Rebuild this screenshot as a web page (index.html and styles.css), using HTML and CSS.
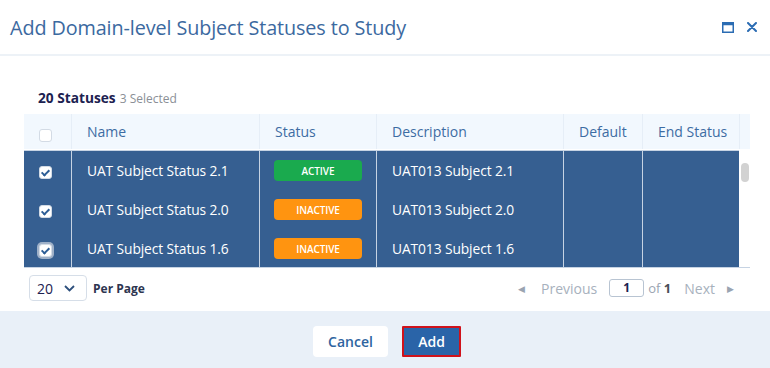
FILE: index.html
```html
<!DOCTYPE html>
<html lang="en">
<head>
    <meta charset="UTF-8">
    <title>Add Domain-level Subject Statuses to Study</title>
    <link rel="stylesheet" href="styles.css">
</head>
<body>
    <div class="dialog">
        <div class="dlg-head">
            <h1>Add Domain-level Subject Statuses to Study</h1>
            <div class="head-tools">
                <svg width="12" height="11" viewBox="0 0 12 11"><rect x="0.75" y="0.75" width="10.5" height="9.5" fill="none" stroke="#2b6cb3" stroke-width="1.5"/><rect x="0.75" y="0.75" width="10.5" height="2.5" fill="#2b6cb3"/></svg>
                <svg width="10" height="10" viewBox="0 0 10 10"><path d="M1 1L9 9M9 1L1 9" stroke="#2b6cb3" stroke-width="2" stroke-linecap="round"/></svg>
            </div>
        </div>

        <div class="dlg-body">
            <div class="summary"><b>20 Statuses</b> <span>3 Selected</span></div>

            <div class="grid">
                <div class="grid-head">
                    <div class="cell chk"><span class="box"></span></div>
                    <div class="cell">Name</div>
                    <div class="cell">Status</div>
                    <div class="cell">Description</div>
                    <div class="cell">Default</div>
                    <div class="cell">End Status</div>
                    <div class="cell"></div>
                </div>
                <div class="grid-scroll">
                    <div class="grid-rows">
                        <div class="row">
                            <div class="cell chk"><span class="box on"></span></div>
                            <div class="cell">UAT Subject Status 2.1</div>
                            <div class="cell"><span class="badge active">ACTIVE</span></div>
                            <div class="cell">UAT013 Subject 2.1</div>
                            <div class="cell"></div>
                            <div class="cell"></div>
                        </div>
                        <div class="row">
                            <div class="cell chk"><span class="box on"></span></div>
                            <div class="cell">UAT Subject Status 2.0</div>
                            <div class="cell"><span class="badge inactive">INACTIVE</span></div>
                            <div class="cell">UAT013 Subject 2.0</div>
                            <div class="cell"></div>
                            <div class="cell"></div>
                        </div>
                        <div class="row">
                            <div class="cell chk"><span class="box on focus"></span></div>
                            <div class="cell">UAT Subject Status 1.6</div>
                            <div class="cell"><span class="badge inactive">INACTIVE</span></div>
                            <div class="cell">UAT013 Subject 1.6</div>
                            <div class="cell"></div>
                            <div class="cell"></div>
                        </div>
                    </div>
                    <div class="scrollbar"><span class="thumb"></span></div>
                </div>
            </div>

            <div class="pager">
                <div class="per-page">
                    <div class="select">20
                        <svg width="11" height="7" viewBox="0 0 11 7"><path d="M1 1L5.5 5.5L10 1" fill="none" stroke="#2d4f7c" stroke-width="1.8"/></svg>
                    </div>
                    <b>Per Page</b>
                </div>
                <div class="pages">
                    <span class="arrow prev">&#9664;</span>
                    <span class="muted">Previous</span>
                    <span class="page-input">1</span>
                    <span class="of">of <b>1</b></span>
                    <span class="muted">Next</span>
                    <span class="arrow">&#9654;</span>
                </div>
            </div>
        </div>

        <div class="dlg-foot">
            <button class="btn cancel">Cancel</button>
            <button class="btn add">Add</button>
        </div>
    </div>
</body>
</html>
```

FILE: styles.css
```css
:root {
    --title-color: #3b69a0;
    --head-bg: #f2f8fe;
    --row-bg: #365f91;
    --line: #c6d3e3;
    --navy: #1c2150;
    --muted: #a7b1bd;
}
body {
    margin: 0;
    font-family: 'Open Sans', 'Noto Sans', Arial, sans-serif;
    background: #fff;
}
.dialog {
    width: 770px;
    height: 368px;
    display: flex;
    flex-direction: column;
}
.dlg-head {
    height: 54px;
    border-bottom: 2px solid #edf2f7;
    display: flex;
    align-items: center;
    justify-content: space-between;
    padding: 0 13px 0 10px;
}
h1 {
    margin: 0;
    font-size: 19.8px;
    font-weight: 400;
    color: var(--title-color);
    letter-spacing: -0.1px;
}
.head-tools {
    display: flex;
    align-items: center;
    gap: 13px;
}
.dlg-body {
    flex: 1;
    padding: 31px 20px 0 24px;
}
.summary {
    padding-left: 14px;
    height: 27px;
    line-height: 20px;
}
.summary b {
    font-size: 13.7px;
    color: var(--navy);
}
.summary span {
    font-size: 12px;
    color: #8a8f96;
}
.grid {
    width: 726px;
}
.grid-head,
.row {
    display: grid;
    grid-template-columns: 47px 188px 117px 187px 79px 97px 11px;
}
.row {
    grid-template-columns: 47px 188px 117px 187px 79px 97px;
    height: 39px;
}
.grid-head {
    height: 35px;
    background: var(--head-bg);
    border-bottom: 1px solid #fff;
}
.cell {
    display: flex;
    align-items: center;
    padding-left: 15px;
    font-size: 14px;
    white-space: nowrap;
}
.row .cell {
    font-size: 13.8px;
    letter-spacing: -0.1px;
}
.grid-head .cell {
    color: #3d6ca3;
    border-left: 1px solid #e6eef7;
}
.grid-head .cell:first-child {
    border-left: none;
}
.cell.chk {
    padding-left: 15px;
    padding-top: 4px;
}
.grid-head .cell.chk {
    padding-top: 8px;
}
.grid-scroll {
    display: flex;
    height: 117px;
    overflow: hidden;
    border-bottom: 1px solid var(--line);
}
.grid-rows {
    width: 715px;
    background: var(--row-bg);
    border-top: 1px solid var(--line);
}
.row .cell {
    color: #fff;
    border-left: 1px solid var(--line);
}
.row .cell:first-child {
    border-left: none;
}
.scrollbar {
    width: 11px;
    padding-top: 13px;
    display: flex;
    justify-content: center;
}
.thumb {
    width: 8px;
    height: 19px;
    border-radius: 4px;
    background: #d2d2d2;
}
.box {
    width: 13px;
    height: 13px;
    box-sizing: border-box;
    border: 1px solid #d3dbe5;
    border-radius: 3px;
    background: #fff;
    display: inline-block;
    position: relative;
}
.box.on::after {
    content: '';
    position: absolute;
    left: 3px;
    top: 1px;
    width: 3px;
    height: 6px;
    border: solid #2d5e96;
    border-width: 0 2px 2px 0;
    transform: rotate(45deg);
}
.box.focus {
    box-shadow: 0 0 0 2px #9fb1c8;
}
.badge {
    width: 88px;
    height: 21px;
    border-radius: 4px;
    color: #fff;
    font-size: 10px;
    font-weight: 600;
    display: flex;
    align-items: center;
    justify-content: center;
    margin-left: -1px;
}
.badge.active {
    background: #1aaa4e;
}
.badge.inactive {
    background: #ff9410;
}
.pager {
    display: flex;
    justify-content: space-between;
    align-items: center;
    height: 28px;
    margin-top: 6px;
    width: 710px;
}
.per-page {
    display: flex;
    align-items: center;
    gap: 6px;
    padding-left: 5px;
}
.select {
    width: 58px;
    height: 26px;
    box-sizing: border-box;
    border: 1px solid #d6dee8;
    border-radius: 4px;
    display: flex;
    align-items: center;
    justify-content: space-between;
    padding: 0 11px 0 7px;
    font-size: 14px;
    color: var(--navy);
}
.per-page b {
    font-size: 12px;
    color: #2d3550;
}
.pages {
    display: flex;
    align-items: center;
    gap: 12px;
    font-size: 14px;
}
.arrow {
    font-size: 9px;
    color: #9aa4b1;
}
.arrow.prev {
    margin-right: 4px;
}
.muted {
    color: var(--muted);
}
.page-input {
    width: 35px;
    height: 18px;
    box-sizing: border-box;
    border: 1px solid #b8c4d2;
    border-radius: 3px;
    text-align: center;
    font-size: 12px;
    font-weight: 700;
    color: var(--navy);
    line-height: 16px;
}
.of {
    color: #9aa4b1;
    margin-left: -8px;
    margin-right: 1px;
    font-size: 13px;
}
.of b {
    color: #4a4f58;
}
.dlg-foot {
    height: 57px;
    box-sizing: border-box;
    background: #e9f0f8;
    display: flex;
    justify-content: center;
    align-items: center;
    gap: 14px;
    padding: 4px 0 0 4px;
}
.btn {
    font-family: inherit;
    font-size: 14px;
    font-weight: 600;
    height: 31px;
    border-radius: 4px;
    cursor: pointer;
}
.btn.cancel {
    width: 75px;
    background: #fff;
    color: #2e64a0;
    border: none;
}
.btn.add {
    width: 59px;
    background: #2a64a8;
    color: #fff;
    border: 2px solid #d0121b;
    border-radius: 1px;
}
```
